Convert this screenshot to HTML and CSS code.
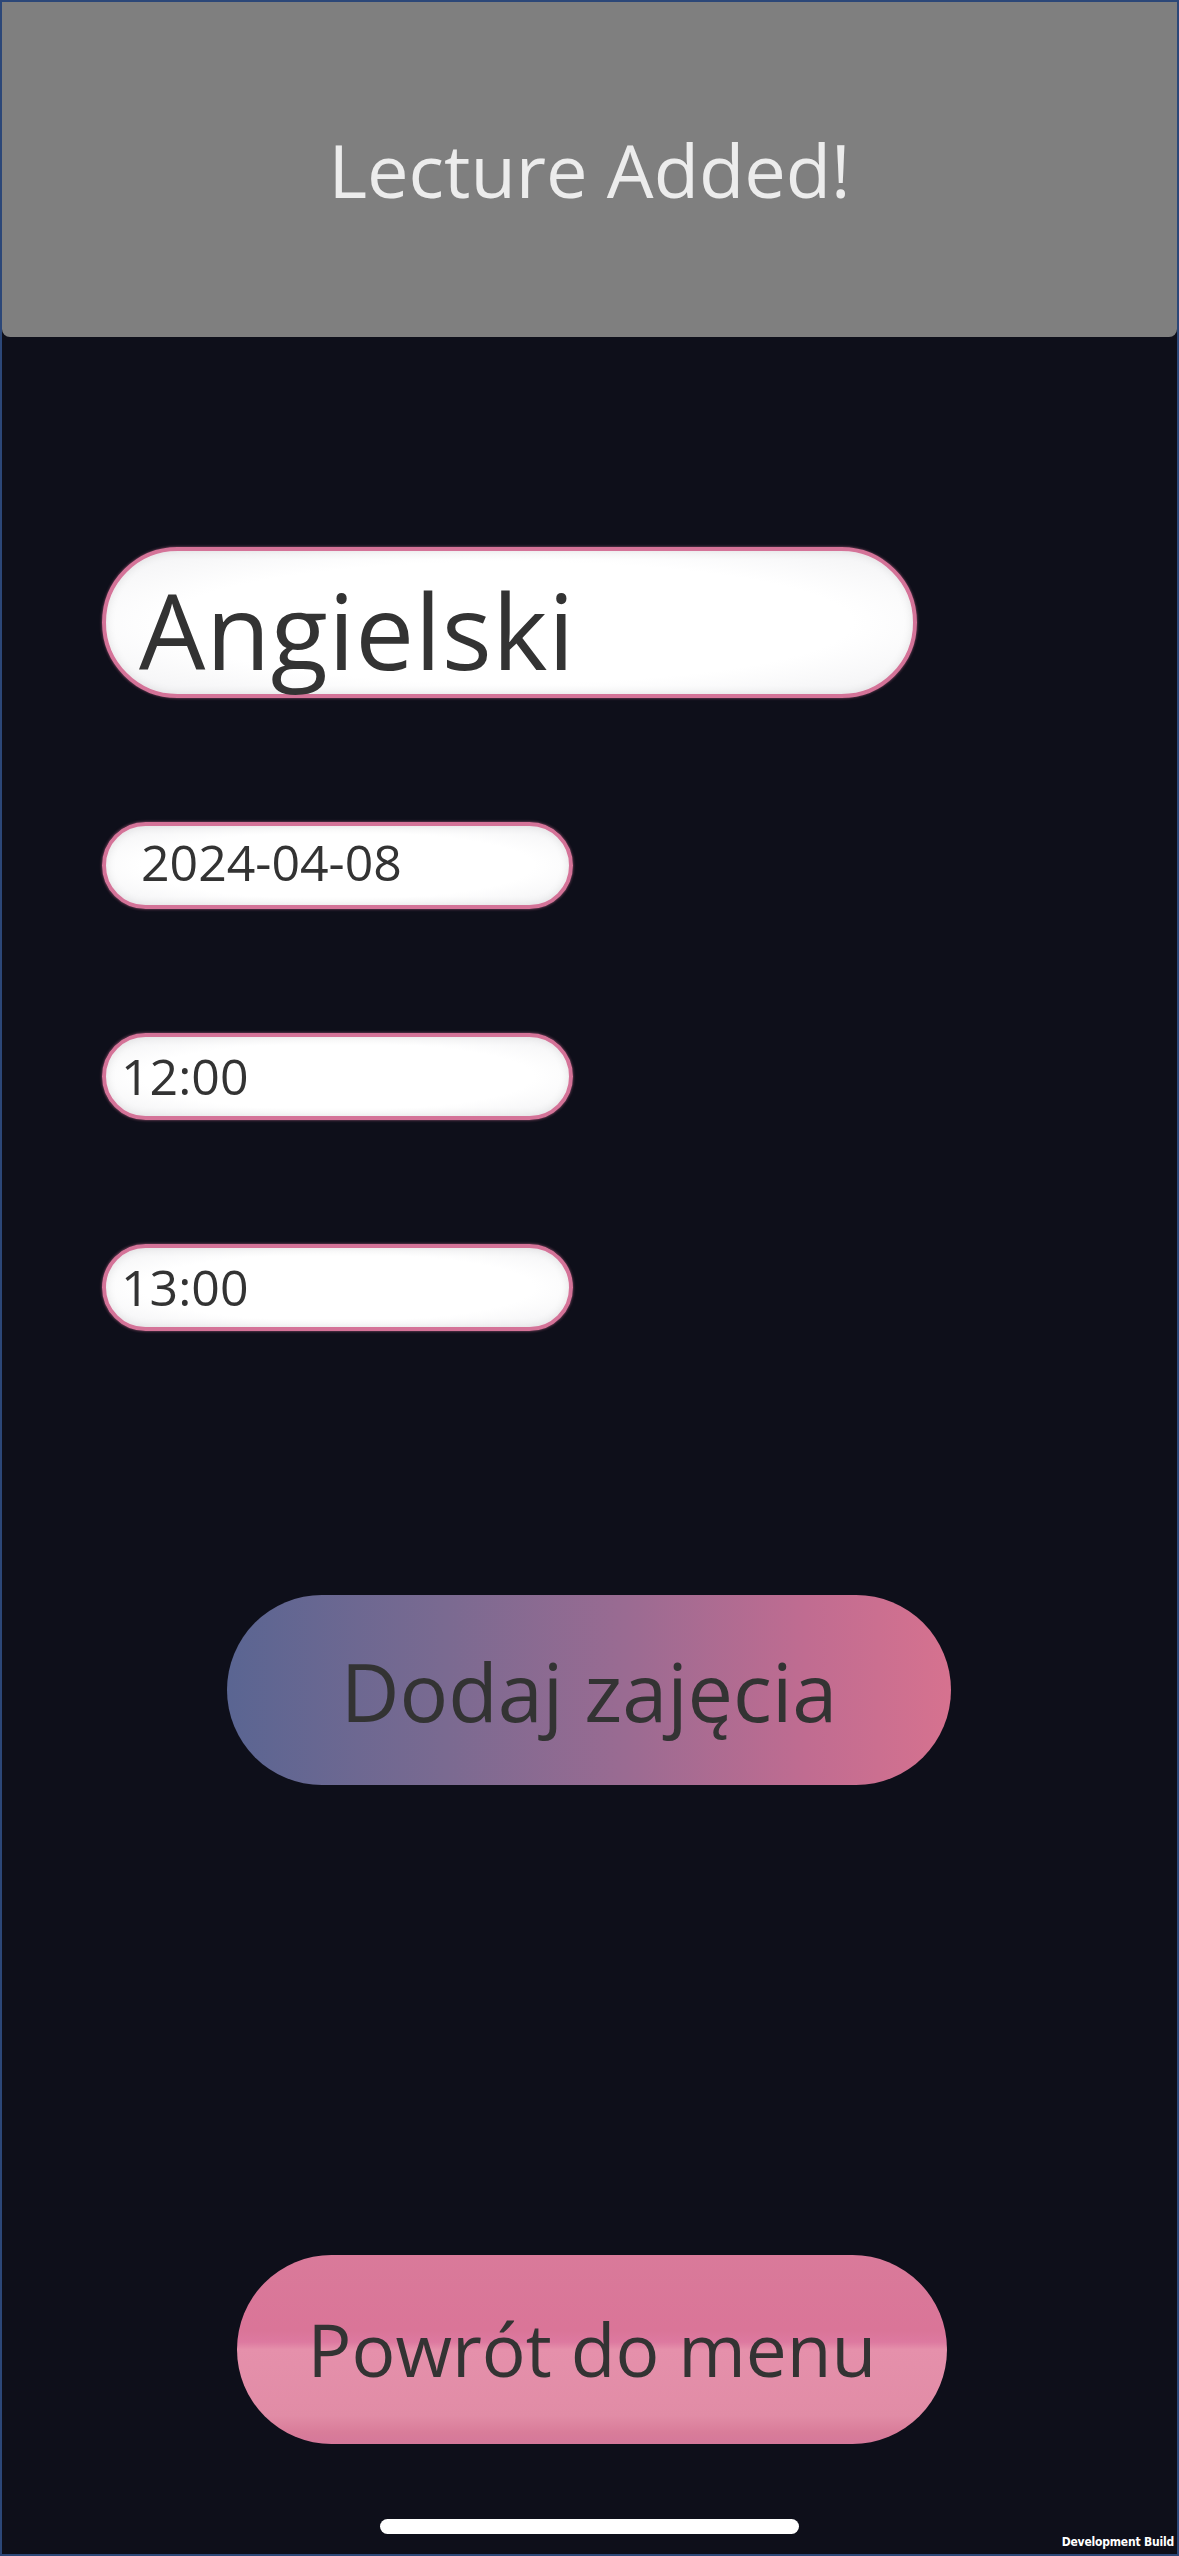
FILE: index.html
```html
<!DOCTYPE html>
<html lang="pl">
<head>
<meta charset="utf-8">
<title>Lecture Added</title>
<link rel="stylesheet" href="styles.css">
</head>
<body>
<div class="screen">
  <div class="banner"><span class="banner-text">Lecture Added!</span></div>
  <div class="form">
    <div class="field field-name">Angielski</div>
    <div class="field field-small field-date">2024-04-08</div>
    <div class="field field-small field-time">12:00</div>
    <div class="field field-small field-time">13:00</div>
    <div class="btn btn-add">Dodaj zajęcia</div>
    <div class="btn btn-back">Powrót do menu</div>
    <div class="home-indicator"></div>
  </div>
  <div class="dev-build">Development Build</div>
</div>
</body>
</html>
```
FILE: styles.css
```css
html, body {
  margin: 0;
  padding: 0;
  background: #0e0f1a;
}
.screen {
  width: 1179px;
  height: 2556px;
  box-sizing: border-box;
  border: 2px solid #2c4778;
  background: #0e0f1a;
  display: flex;
  flex-direction: column;
  position: relative;
  overflow: hidden;
  font-family: "Open Sans", "Noto Sans", sans-serif;
}
.banner {
  height: 335px;
  background: #7f7f7f;
  border-radius: 0 0 8px 8px;
  display: flex;
  justify-content: center;
  align-items: flex-start;
  box-sizing: border-box;
  padding-top: 131px;
}
.banner-text {
  font-size: 74px;
  line-height: 1;
  color: #ececec;
}
.form {
  display: flex;
  flex-direction: column;
  align-items: flex-start;
  padding-left: 100px;
}
.field {
  box-sizing: border-box;
  background: radial-gradient(ellipse at center, #ffffff 60%, #f1f1f3 100%);
  border: 4px solid #d47398;
  border-radius: 999px;
  box-shadow: 0 0 3px rgba(212, 115, 152, 0.7), inset 0 0 10px rgba(0, 0, 0, 0.10);
  color: #333333;
  line-height: 1;
  white-space: nowrap;
}
.field-name {
  margin-top: 210px;
  width: 815px;
  height: 151px;
  font-size: 105px;
  padding: 26px 0 0 33px;
  letter-spacing: 0.5px;
}
.field-small {
  width: 471px;
  height: 87px;
  font-size: 50px;
  margin-top: 124px;
}
.field-date {
  padding: 11px 0 0 35px;
}
.field-time {
  padding: 14px 0 0 15px;
}
.btn {
  box-sizing: border-box;
  border-radius: 999px;
  color: #333333;
  line-height: 1;
  display: flex;
  justify-content: center;
  align-items: flex-start;
  white-space: nowrap;
}
.btn-add {
  margin-top: 264px;
  margin-left: 125px;
  width: 724px;
  height: 190px;
  font-size: 81px;
  padding-top: 55px;
  background: linear-gradient(to right, #5a6592 0%, #7a6a91 30%, #9a6b92 55%, #c06c91 80%, #d6728f 100%);
}
.btn-back {
  margin-top: 470px;
  margin-left: 135px;
  width: 710px;
  height: 189px;
  font-size: 73px;
  padding-top: 57px;
  background: linear-gradient(to bottom, #d97a9a 0%, #da7598 40%, #dd79a0 46%, #e590ab 50%, #e18ca6 85%, #d87c99 94%, #d5789a 100%);
}
.home-indicator {
  margin-top: 75px;
  margin-left: 278px;
  width: 419px;
  height: 15px;
  border-radius: 8px;
  background: #ffffff;
}
.dev-build {
  position: absolute;
  right: 3px;
  bottom: 6px;
  font-family: "DejaVu Sans Condensed", "DejaVu Sans", sans-serif;
  font-weight: bold;
  font-size: 12px;
  letter-spacing: -0.2px;
  line-height: 1;
  color: #ffffff;
}
```
